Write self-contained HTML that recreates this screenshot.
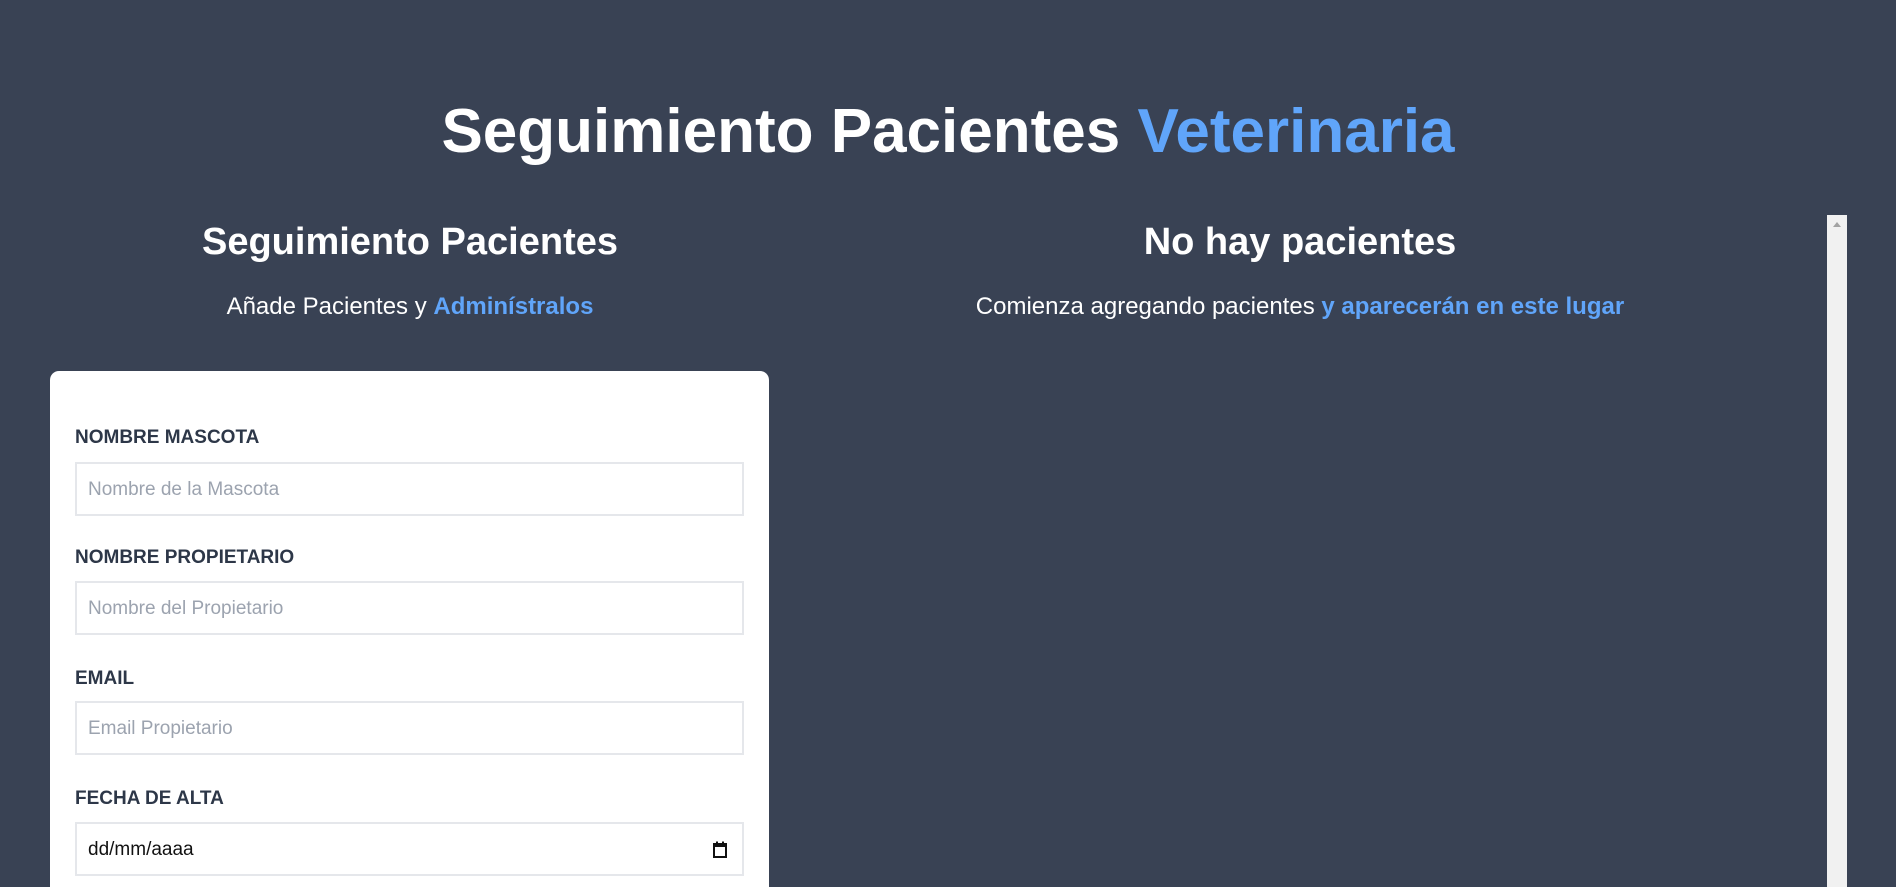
<!DOCTYPE html>
<html style="overflow:hidden;height:887px"><head><meta charset="utf-8"><style>
*{box-sizing:border-box;margin:0;padding:0}
body{width:1896px;height:887px;background:#394254;font-family:"Liberation Sans",sans-serif;overflow:hidden;position:relative;color:#fff}
.c{position:absolute;text-align:center;white-space:nowrap}
.b{color:#60a5fa}
h1{font-size:62px;font-weight:700;letter-spacing:0}
h2{font-size:38px;font-weight:700;letter-spacing:0}
p.s{font-size:24px}
.card{position:absolute;left:50px;top:371px;width:719px;height:516px;background:#fff;border-radius:9px 9px 0 0}
label{position:absolute;left:25px;font-size:19px;font-weight:700;color:#2d3748}
.in{position:absolute;left:25px;width:669px;height:54px;border:2px solid #e5e7eb;font-size:19px;color:#9ca3af;padding-left:11px;line-height:52px}
</style></head><body>
<div class="c" style="left:0;width:1896px;top:96px"><h1>Seguimiento Pacientes <span class="b">Veterinaria</span></h1></div>
<div class="c" style="left:110px;width:600px;top:221px"><h2>Seguimiento Pacientes</h2></div>
<div class="c" style="left:110px;width:600px;top:293px"><p class="s">Añade Pacientes y <b class="b">Adminístralos</b></p></div>
<div class="c" style="left:1000px;width:600px;top:221px"><h2>No hay pacientes</h2></div>
<div class="c" style="left:900px;width:800px;top:293px"><p class="s">Comienza agregando pacientes <b class="b">y aparecerán en este lugar</b></p></div>
<div class="card">
<label style="top:56px">NOMBRE MASCOTA</label>
<div class="in" style="top:91px">Nombre de la Mascota</div>
<label style="top:176px">NOMBRE PROPIETARIO</label>
<div class="in" style="top:210px">Nombre del Propietario</div>
<label style="top:297px">EMAIL</label>
<div class="in" style="top:330px">Email Propietario</div>
<label style="top:417px">FECHA DE ALTA</label>
<div class="in" style="top:451px;color:#111">dd/mm/aaaa
<svg style="position:absolute;right:14px;top:17px" width="16" height="18" viewBox="0 0 16 18"><rect x="2" y="3" width="12" height="13" fill="none" stroke="#111" stroke-width="2"/><rect x="2" y="3" width="12" height="3" fill="#111"/><rect x="4" y="0.5" width="2" height="3" fill="#111"/><rect x="10" y="0.5" width="2" height="3" fill="#111"/></svg></div>
</div>
<div style="position:absolute;left:1827px;top:215px;width:20px;height:672px;background:#f1f1f1"></div>
<div style="position:absolute;left:1833px;top:222px;width:0;height:0;border-left:4px solid transparent;border-right:4px solid transparent;border-bottom:5px solid #a3a3a3"></div>
</body></html>
